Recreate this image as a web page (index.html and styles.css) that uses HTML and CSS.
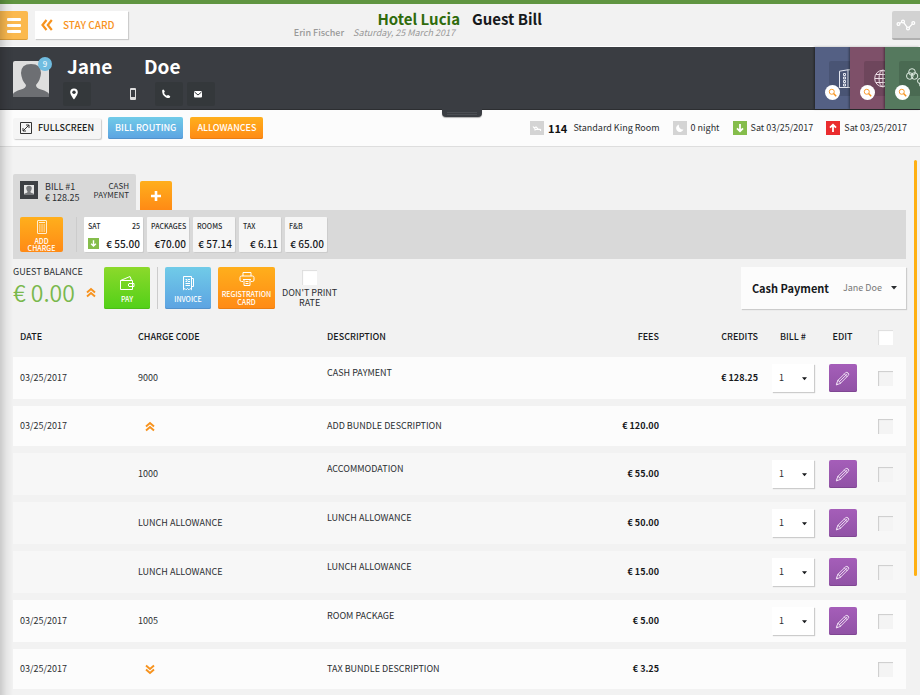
FILE: index.html
```html
<!DOCTYPE html>
<html lang="en">
<head>
<meta charset="utf-8">
<meta name="viewport" content="width=device-width, initial-scale=1">
<title>Guest Bill</title>
<link rel="stylesheet" href="styles.css">
</head>
<body>
<svg class="sprite" aria-hidden="true">
  <symbol id="chevrons" viewBox="0 0 10 10"><path d="M1 5 5 1.5 9 5M1 9 5 5.5 9 9" fill="none" stroke="currentColor" stroke-width="1.9"/></symbol>
  <symbol id="caret" viewBox="0 0 6 4"><path d="M0 0h6L3 3.6z" fill="currentColor"/></symbol>
  <symbol id="pencil" viewBox="0 0 16 16"><g fill="none" stroke="currentColor" stroke-width="1" stroke-linejoin="round" stroke-linecap="round"><path d="M1.500 14.500 3 10 11.300 1.900Q12.700.8 14 2.100T14.100 4.800L5.900 13z"/><path d="M3 10q1.300-.1 1.500 1.400Q5.900 11.600 5.900 13M4.500 11.400l8.300-8M10 3.200 12.800 6M1.800 13.300l1 .9"/></g></symbol>
  <symbol id="person" viewBox="0 0 36 36"><path d="M0 36v-3q1-2.500 8-4.500 5-1.500 5-4.500-4.500-5-5-12Q8 3 18 3t10 9q-.5 7-5 12 0 3 5 4.500 7 2 8 4.500v3z" fill="currentColor"/></symbol>
  <symbol id="lens" viewBox="0 0 10 10"><circle cx="4.200" cy="4.200" r="2.800" fill="none" stroke="currentColor"/><path d="m6.200 6.200 2.900 2.900" stroke="currentColor" stroke-width="1.600"/></symbol>
  <symbol id="arrow-down" viewBox="0 0 14 14"><path d="M7 3v7M4 7.300l3 3 3-3" fill="none" stroke="#fff" stroke-width="1.800"/></symbol>
  <symbol id="arrow-up" viewBox="0 0 14 14"><path d="M7 11V4M4 6.700l3-3 3 3" fill="none" stroke="#fff" stroke-width="1.800"/></symbol>
</svg>

<header class="topbar">
  <div class="topbar-left">
    <button class="menu-btn" aria-label="Menu"><span></span><span></span><span></span></button>
    <a class="stay-card" href="#"><svg class="back-icon" aria-hidden="true" viewBox="0 0 12 12"><path d="M5.500 1 1.500 6l4 5M10.800 1l-4 5 4 5" fill="none" stroke="currentColor" stroke-width="2.200"/></svg>STAY CARD</a>
    <div class="hotel">
      <strong class="title hotel-name">Hotel Lucia</strong>
      <span class="subtitle"><b>Erin Fischer</b><i>Saturday, 25 March 2017</i></span>
    </div>
  </div>
  <div class="topbar-right">
    <h1 class="title">Guest Bill</h1>
    <button class="stats-btn" aria-label="Statistics"><svg viewBox="0 0 20 12"><g fill="none" stroke="#fff" stroke-width="1.300"><circle cx="2.500" cy="5" r="1.400"/><circle cx="7" cy="2.500" r="1.400"/><circle cx="12" cy="9.500" r="1.400"/><circle cx="17.300" cy="4" r="1.400"/><path d="m3.800 4.300 2-1.100M7.800 3.700l3.400 4.600M13 8.500l3.300-3.400"/></g></svg></button>
  </div>
</header>

<section class="guest">
  <div class="avatar"><svg aria-hidden="true"><use href="#person"/></svg><span class="badge">9</span></div>
  <div class="guest-info">
    <h2 class="guest-name"><span class="first">Jane</span><span>Doe</span></h2>
    <div class="contacts">
      <button class="contact" aria-label="Address"><svg viewBox="0 0 12 12"><path d="M6 .5a3.800 3.800 0 0 0-3.800 3.800C2.200 7 6 11.500 6 11.500S9.800 7 9.800 4.300A3.800 3.800 0 0 0 6 .5z" fill="#fff"/><circle cx="6" cy="4.300" r="1.700" fill="#34383b"/></svg></button>
      <button class="contact mobile" aria-label="Mobile"><svg viewBox="0 0 12 12"><path d="M3.500.5h5v11h-5zM3.500 1.500h5M3.500 9.500h5M3.500 10.500h5" fill="none" stroke="#ddd"/></svg></button>
      <button class="contact" aria-label="Phone"><svg viewBox="0 0 12 12"><path d="M2.200 2.200Q3.200 1 4 2l.8 1.500q.2.600-.8 1.300.5 2 2.800 3 .8-1 1.400-.7l1.700.9q.9.600-.3 1.700-1.200.9-3.600-.3Q1.600 6.900 2.200 2.200z" fill="#fff"/></svg></button>
      <button class="contact" aria-label="Email"><svg viewBox="0 0 12 12"><rect x="2" y="3" width="8" height="6.500" rx="1" fill="#fff"/><path d="m2.500 4 3.500 3 3.500-3" fill="none" stroke="#34383b"/></svg></button>
    </div>
  </div>
  <nav class="tiles" aria-label="Guest cards">
    <a class="tile blue" href="#" aria-label="Reservation"><span class="tile-box"><svg viewBox="0 0 20 20"><g fill="none" stroke="#e4e7f0" stroke-width="1"><path d="M.5 18.500V2.200L9 .8v17.700zM9 .8h11M0 18.500h20"/><path d="M4.500 4.500h2v2h-2zM4.500 8h2v2h-2zM4.500 11.500h2v2h-2zM4.500 15h2v2h-2z"/></g></svg></span><span class="find"><svg><use href="#lens"/></svg></span></a>
    <a class="tile plum" href="#" aria-label="Web"><span class="tile-box"><svg viewBox="0 0 20 20"><g fill="none" stroke="#eedfe7" stroke-width="1"><circle cx="9" cy="9.500" r="8.300"/><ellipse cx="9" cy="9.500" rx="4" ry="8.300"/><path d="M9 1v17M.8 9.500h16.500M2 5.500h14M2 13.500h14"/></g></svg></span><span class="find"><svg><use href="#lens"/></svg></span></a>
    <a class="tile green" href="#" aria-label="Groups"><span class="tile-box"><svg viewBox="0 0 20 20"><g fill="none" stroke="#deebe1" stroke-width="1"><circle cx="6" cy="4" r="3.300"/><circle cx="3.800" cy="8" r="3.300"/><circle cx="8.500" cy="8" r="3.300"/><circle cx="14" cy="13" r="2.500"/><circle cx="16" cy="16.500" r="2.500"/></g></svg></span><span class="find"><svg><use href="#lens"/></svg></span></a>
  </nav>
  <button class="handle" aria-label="Expand guest details"><span></span></button>
</section>

<section class="toolbar">
  <button class="btn plain"><svg viewBox="0 0 12 12"><path d="M.5.5h11v11H.500zM3 9l6-6M6 3h3v3M3 6v3h3" fill="none" stroke="#333"/></svg>FULLSCREEN</button>
  <button class="btn sky">BILL ROUTING</button>
  <button class="btn amber">ALLOWANCES</button>
  <div class="stay">
    <span class="fact"><svg class="grey" viewBox="0 0 14 14"><path d="M3 5.500 5 8v1.500M4 7l2-1 2 2 2.500.5v1.500M5 8.500h5" fill="none" stroke="#fff" stroke-width="1.200"/></svg><b>114</b><span>Standard King Room</span></span>
    <span class="fact"><svg class="grey" viewBox="0 0 14 14"><path d="M6 3.500a3.800 3.800 0 1 0 4.500 5A4 4 0 0 1 6 3.500z" fill="#fff"/></svg>0 night</span>
    <span class="fact"><svg class="lime"><use href="#arrow-down"/></svg>Sat 03/25/2017</span>
    <span class="fact"><svg class="red"><use href="#arrow-up"/></svg>Sat 03/25/2017</span>
  </div>
</section>

<main>
  <div class="scrollbar" aria-hidden="true"></div>
  <div class="tabs">
    <button class="bill-tab">
      <span class="thumb"><svg aria-hidden="true"><use href="#person"/></svg></span>
      <span class="bill-sum">BILL #1<br>€ 128.25</span>
      <span class="bill-pay">CASH<br>PAYMENT</span>
    </button>
    <button class="add-bill" aria-label="Add bill"><svg viewBox="0 0 10 10"><path d="M5 0v10M0 5h10" stroke="#fff" stroke-width="2.600"/></svg></button>
  </div>

  <div class="charges">
    <button class="add-charge"><svg viewBox="0 0 12 14"><g fill="none" stroke="#fff" stroke-width=".8"><rect x="1.500" y=".5" width="9" height="13" rx=".5"/><path d="M3 2.500h6M3 5h1.500M5.300 5h1.500M7.500 5H9M3 7h1.500M5.300 7h1.500M7.500 7H9M3 9h1.500M5.300 9h1.500M7.500 9H9M3 11h1.500M5.300 11h1.500M7.500 11H9"/></g></svg>ADD<br>CHARGE</button>
    <span class="rule"></span>
    <div class="cards">
      <div class="card day"><span class="cap">SAT<span>25</span></span><span class="sum"><svg class="lime"><use href="#arrow-down"/></svg>€ 55.00</span></div>
      <div class="card"><span class="cap">PACKAGES</span><span class="sum">€70.00</span></div>
      <div class="card"><span class="cap">ROOMS</span><span class="sum">€ 57.14</span></div>
      <div class="card"><span class="cap">TAX</span><span class="sum">€ 6.11</span></div>
      <div class="card"><span class="cap">F&amp;B</span><span class="sum">€ 65.00</span></div>
    </div>
  </div>

  <div class="actions">
    <div class="balance"><span>GUEST BALANCE</span><span class="amount">€ 0.00<svg class="chev"><use href="#chevrons"/></svg></span></div>
    <button class="action lawn"><svg viewBox="0 0 16 16"><g fill="none" stroke="#fff" stroke-linejoin="round"><path d="M1.500 5.500h12V14.500h-12zM1.500 5.500 11 1.500l1.500 3.800M13.500 8.500H10q-1.500 1.500 0 3h3.500M13.500 8.500h1.500v3h-1.500"/></g></svg>PAY</button>
    <span class="rule"></span>
    <button class="action sky"><svg viewBox="0 0 16 16"><g fill="none" stroke="#fff"><path d="M3.500 14.800V1.500h8v13.300l-1.300-1.300-1.300 1.300-1.400-1.300-1.300 1.300-1.300-1.300zM11.500 3.500h2v8h-2"/><path d="M5.500 4.500h1.500v2H5.500M8 4.500h2M8 6.500h2M5.500 8.500H10M5.500 10.500H10"/></g></svg>INVOICE</button>
    <button class="action amber wide"><svg viewBox="0 0 16 16"><g fill="none" stroke="#fff" stroke-linejoin="round"><path d="M4 5V1.500h8V5M4 10.500H2.500Q1 10.500 1 9V6.500Q1 5 2.500 5h11Q15 5 15 6.500V9q0 1.500-1.500 1.500H12M4 8.500h8M5 8.500v6h6v-6M6.500 10.500h3M6.500 12.500h3"/></g></svg>REGISTRATION CARD</button>
    <label class="no-rate"><input type="checkbox" class="check white">DON'T PRINT<br>RATE</label>
    <button class="payer" aria-haspopup="listbox"><b>Cash Payment</b><span>Jane Doe</span><svg><use href="#caret"/></svg></button>
  </div>

  <table>
    <colgroup><col class="c-date"><col class="c-code"><col><col class="c-fees"><col class="c-credits"><col class="c-bill"><col class="c-edit"><col class="c-check"></colgroup>
    <thead>
      <tr><th>DATE</th><th>CHARGE CODE</th><th>DESCRIPTION</th><th class="num">FEES</th><th class="num">CREDITS</th><th class="mid">BILL #</th><th class="mid">EDIT</th><th class="mid"><input type="checkbox" class="check white" aria-label="Select all"></th></tr>
    </thead>
    <tbody>
      <tr class="tall"><td>03/25/2017</td><td>9000</td><td class="desc">CASH PAYMENT</td><td class="num"></td><td class="num">€ 128.25</td><td class="mid"><span class="pick"><select aria-label="Bill number, cash payment"><option>1</option></select><svg><use href="#caret"/></svg></span></td><td class="mid"><button class="edit" aria-label="Edit cash payment"><svg><use href="#pencil"/></svg></button></td><td class="mid"><input type="checkbox" class="check" aria-label="Select cash payment"></td></tr>
      <tr><td>03/25/2017</td><td><button class="toggle" aria-label="Collapse bundle"><svg class="chev"><use href="#chevrons"/></svg></button></td><td>ADD BUNDLE DESCRIPTION</td><td class="num">€ 120.00</td><td class="num"></td><td></td><td></td><td class="mid"><input type="checkbox" class="check" aria-label="Select bundle"></td></tr>
      <tr class="tall sub"><td></td><td>1000</td><td class="desc">ACCOMMODATION</td><td class="num">€ 55.00</td><td class="num"></td><td class="mid"><span class="pick"><select aria-label="Bill number, accommodation"><option>1</option></select><svg><use href="#caret"/></svg></span></td><td class="mid"><button class="edit" aria-label="Edit accommodation"><svg><use href="#pencil"/></svg></button></td><td class="mid"><input type="checkbox" class="check" aria-label="Select accommodation"></td></tr>
      <tr class="tall sub"><td></td><td>LUNCH ALLOWANCE</td><td class="desc">LUNCH ALLOWANCE</td><td class="num">€ 50.00</td><td class="num"></td><td class="mid"><span class="pick"><select aria-label="Bill number, first lunch allowance"><option>1</option></select><svg><use href="#caret"/></svg></span></td><td class="mid"><button class="edit" aria-label="Edit first lunch allowance"><svg><use href="#pencil"/></svg></button></td><td class="mid"><input type="checkbox" class="check" aria-label="Select first lunch allowance"></td></tr>
      <tr class="tall sub"><td></td><td>LUNCH ALLOWANCE</td><td class="desc">LUNCH ALLOWANCE</td><td class="num">€ 15.00</td><td class="num"></td><td class="mid"><span class="pick"><select aria-label="Bill number, second lunch allowance"><option>1</option></select><svg><use href="#caret"/></svg></span></td><td class="mid"><button class="edit" aria-label="Edit second lunch allowance"><svg><use href="#pencil"/></svg></button></td><td class="mid"><input type="checkbox" class="check" aria-label="Select second lunch allowance"></td></tr>
      <tr class="tall"><td>03/25/2017</td><td>1005</td><td class="desc">ROOM PACKAGE</td><td class="num">€ 5.00</td><td class="num"></td><td class="mid"><span class="pick"><select aria-label="Bill number, room package"><option>1</option></select><svg><use href="#caret"/></svg></span></td><td class="mid"><button class="edit" aria-label="Edit room package"><svg><use href="#pencil"/></svg></button></td><td class="mid"><input type="checkbox" class="check" aria-label="Select room package"></td></tr>
      <tr><td>03/25/2017</td><td><button class="toggle" aria-label="Expand bundle"><svg class="chev down"><use href="#chevrons"/></svg></button></td><td>TAX BUNDLE DESCRIPTION</td><td class="num">€ 3.25</td><td class="num"></td><td></td><td></td><td class="mid"><input type="checkbox" class="check" aria-label="Select tax bundle"></td></tr>
    </tbody>
  </table>
</main>
</body>
</html>
```
FILE: styles.css
```css
* { box-sizing: border-box; }

body {
  margin: 0;
  background: #f2f2f2;
  color: #2b2e31;
  font: 9px/10px "Noto Sans CJK SC", "Noto Sans", sans-serif;
}

/* soft shade down the left edge of the window */
body::before {
  content: "";
  position: fixed;
  inset: 0 auto 0 0;
  width: 13px;
  background: linear-gradient(90deg, rgba(0, 0, 0, .16), rgba(0, 0, 0, .05) 50%, rgba(0, 0, 0, 0));
  pointer-events: none;
  z-index: 5;
}

button, select, input { font: inherit; color: inherit; margin: 0; }
button { border: 0; padding: 0; background: none; cursor: pointer; }
a { color: inherit; text-decoration: none; }
h1, h2 { margin: 0; }
svg { display: block; flex: none; }
.sprite { position: absolute; width: 0; height: 0; }

/* top bar */
.topbar {
  display: grid;
  grid-template-columns: 1fr 1fr;
  height: 47px;
  border-top: 4px solid #609541;
  border-bottom: 1px solid #fff;
}
.topbar-left, .topbar-right { display: flex; align-items: flex-start; padding-top: 7px; }
.topbar-right { justify-content: space-between; padding-left: 12px; }
.menu-btn {
  display: flex;
  flex-direction: column;
  justify-content: center;
  align-items: center;
  gap: 3px;
  width: 28px;
  height: 29px;
  background: #fbb94e;
  border-bottom: 1px solid #d99c3a;
  border-radius: 0 2px 2px 0;
}
.menu-btn span { width: 14px; height: 3px; border-radius: 1px; background: #fff; }
.stay-card {
  display: flex;
  align-items: center;
  gap: 10px;
  height: 28px;
  margin-left: 7px;
  padding: 0 13px 0 6px;
  background: #fff;
  box-shadow: 1px 1px 1px #ccc;
  color: #f7931e;
  font-size: 10px;
  font-weight: 500;
}
.back-icon { width: 12px; height: 12px; }
.hotel { display: flex; flex-direction: column; align-items: flex-end; margin-left: auto; }
.title { font-size: 15px; line-height: 15px; font-weight: 700; color: #17191c; white-space: nowrap; }
.hotel-name { color: #2f6b0c; }
.subtitle { display: flex; gap: 9px; padding-right: 5px; line-height: 14px; color: #999; white-space: nowrap; }
.subtitle b { font-weight: 500; }
.stats-btn {
  display: grid;
  place-items: center;
  width: 28px;
  height: 29px;
  background: #d2d2d2;
  border-bottom: 2px solid #b0b0b0;
  border-radius: 2px 0 0 2px;
}
.stats-btn svg { width: 20px; height: 12px; }

/* guest strip */
.guest { position: relative; display: flex; height: 63px; padding-left: 13px; background: #3a3d42; border-bottom: 1px solid #2c2e31; }
.avatar { position: relative; width: 36px; height: 36px; margin-top: 14px; border-radius: 2px; background: #dedede; color: #6d6f73; }
.avatar svg { width: 36px; height: 36px; }
.badge {
  position: absolute;
  top: -4px;
  right: -3px;
  width: 14px;
  height: 14px;
  border-radius: 50%;
  background: #70bce0;
  color: #fff;
  font-size: 8px;
  line-height: 14px;
  text-align: center;
}
.guest-info { padding: 9px 0 0 14px; }
.guest-name { display: flex; padding-left: 4px; color: #fff; font-size: 19px; line-height: 20px; }
.first { width: 77px; }
.contacts { display: flex; gap: 4px; margin-top: 6px; }
.contact { display: flex; align-items: center; width: 28px; height: 24px; padding-left: 5px; background: #34383b; border-radius: 2px; }
.contact svg { width: 12px; height: 12px; }
.mobile { margin: 0 4px 0 24px; padding-left: 8px; background: none; }
.tiles { display: flex; margin-left: auto; }
.tile { position: relative; width: 35px; padding: 14px 0 0 14px; overflow: hidden; box-shadow: -1px 0 2px rgba(0, 0, 0, .4); }
.tile-box { display: block; height: 35px; padding: 8px 0 0 10px; border-radius: 2px 0 0 2px; background: rgba(0, 0, 0, .12); }
.tile-box svg { width: 20px; height: 20px; }
.blue { background: #546084; }
.plum { background: #7e5069; }
.green { background: #55795e; }
.green .tile-box { padding-left: 7px; padding-top: 7px; }
.find { position: absolute; left: 10px; top: 38px; display: grid; place-items: center; width: 15px; height: 15px; border-radius: 50%; background: #fff; color: #f7931e; }
.find svg { width: 9px; height: 9px; }
.handle { position: absolute; left: 48%; top: 100%; width: 40px; height: 8px; padding: 1px 5px; border-radius: 0 0 4px 4px; background: #3a3d42; box-shadow: 0 1px 1px rgba(0, 0, 0, .3); }
.handle span { display: block; height: 3px; border: solid #4b4e53; border-width: 1px 0; }

/* toolbar */
.toolbar { display: flex; align-items: center; gap: 7px; height: 37px; padding: 0 13px; background: #fcfcfc; border-bottom: 1px solid #dedede; }
.btn { display: flex; align-items: center; gap: 6px; height: 22px; padding: 0 7px; border-radius: 2px; color: #fff; font-weight: 500; white-space: nowrap; }
.plain { height: 21px; background: #f5f5f5; box-shadow: 1px 1px 1px #ccc; color: #1c1e20; }
.plain svg { width: 12px; height: 12px; }
.sky { background: linear-gradient(#70cbe8, #5ca3e2); box-shadow: inset 0 -1px #5292cc; }
.amber { background: linear-gradient(#ffaf1c, #ff8a15); box-shadow: inset 0 -1px #ea7d12; }
.lawn { background: linear-gradient(#8cd92b, #52d018); box-shadow: inset 0 -1px #4bbd16; }
.stay { display: flex; gap: 13px; margin-left: auto; }
.fact { display: flex; align-items: center; gap: 4px; white-space: nowrap; }
.fact svg { width: 14px; height: 14px; }
.fact b { margin-right: 2px; font-size: 11px; color: #111; }
.grey { background: #d4d4d4; }
.lime { background: #85bd4b; }
.red { background: #ea2c2e; }

/* content */
main { position: relative; padding: 27px 14px 0 13px; }
.scrollbar { position: absolute; top: 13px; right: 3px; width: 3px; height: 416px; border-radius: 2px; background: #ffb014; }
.tabs { display: flex; align-items: flex-end; gap: 4px; }
.bill-tab { display: flex; align-items: flex-start; width: 123px; height: 36px; padding: 7px 7px 0; border-radius: 2px 2px 0 0; background: #d9d9d9; text-align: left; }
.thumb { width: 18px; height: 18px; padding: 4px; background: #3d4044; }
.thumb svg { width: 10px; height: 10px; background: #e6e6e6; color: #77797c; }
.bill-sum { margin-left: 7px; line-height: 11px; }
.bill-pay { margin-left: auto; font-size: 8px; line-height: 9px; text-align: right; }
.add-bill { display: grid; place-items: center; width: 32px; height: 29px; border-radius: 2px 2px 0 0; background: linear-gradient(#ffaf1c, #ff8a15); }
.add-bill svg { width: 10px; height: 10px; }
.charges { display: flex; gap: 7px; padding: 7px; background: #d9d9d9; }
.add-charge { display: flex; flex-direction: column; align-items: center; justify-content: flex-end; width: 43px; height: 35px; border-radius: 2px; background: linear-gradient(#ffaf1c, #ff8a15); color: #fff; font-size: 7px; line-height: 7px; font-weight: 500; }
.add-charge svg { width: 12px; height: 14px; margin-bottom: 4px; }
.rule { width: 1px; background: #ccc; }
.charges .rule { margin-left: 6px; }
.cards { display: flex; gap: 4px; }
.card { display: flex; flex-direction: column; justify-content: space-between; width: 42px; height: 35px; padding: 4px 3px 3px 4px; border-radius: 1px; background: #f6f6f6; box-shadow: 1px 1px #ccc; white-space: nowrap; }
.day { width: 59px; background: #fff; }
.cap { display: flex; justify-content: space-between; font-size: 7px; font-weight: 500; }
.sum { display: flex; justify-content: flex-end; align-items: center; font-size: 10px; font-weight: 500; color: #17191c; }
.sum svg { width: 11px; height: 11px; margin-right: auto; }

.actions { display: flex; gap: 7px; height: 42px; margin-top: 8px; }
.balance { display: flex; flex-direction: column; width: 84px; white-space: nowrap; }
.amount { display: flex; align-items: center; justify-content: space-between; padding-right: 1px; color: #79b84c; font-size: 23px; line-height: 30px; font-weight: 350; }
.chev { width: 10px; height: 11px; color: #f7931e; }
.down { transform: rotate(180deg); }
.action { display: flex; flex-direction: column; align-items: center; justify-content: flex-end; width: 46px; padding-bottom: 6px; border-radius: 2px; color: #fff; font-size: 7px; line-height: 8px; font-weight: 500; }
.action svg { width: 16px; height: 16px; margin-bottom: 4px; }
.wide { width: 57px; padding-bottom: 3px; }
.wide svg { margin-bottom: 3px; }
.no-rate { padding-top: 3px; text-align: center; white-space: nowrap; }
.no-rate .check { margin: 0 auto 3px; }
.payer { display: flex; align-items: center; margin-left: auto; padding: 0 9px 0 11px; background: #fcfcfc; box-shadow: 1px 1px 1px #ccc; }
.payer b { margin-right: 14px; font-size: 11px; font-weight: 700; color: #17191c; }
.payer span { margin-right: 9px; color: #777; }
.payer svg { width: 6px; height: 4px; }

.check { appearance: none; display: block; width: 15px; height: 15px; margin: auto; background: #f4f4f4; box-shadow: inset 1px 1px 1px #ccc; }
.white { background: #fff; box-shadow: inset 1px 1px 1px #ddd; }

/* ledger */
table { width: 100%; margin-top: 8px; table-layout: fixed; border-collapse: separate; border-spacing: 0 7px; }
.c-date { width: 118px; }
.c-code { width: 189px; }
.c-fees { width: 146px; }
.c-credits { width: 99px; }
.c-bill { width: 56px; }
.c-edit { width: 43px; }
.c-check { width: 42px; }
th, td { padding: 0 7px; text-align: left; }
th { height: 26px; font-weight: 500; color: #17191c; }
td { height: 40px; background: #fcfcfc; }
.tall td { height: 42px; }
.sub td { background: #f7f7f7; }
.num { text-align: right; font-weight: 700; color: #17191c; }
th.num { font-weight: 500; }
.mid { padding: 0; text-align: center; }
td.desc { padding-top: 11px; vertical-align: top; }
.toggle { display: block; margin-left: 7px; }
.pick { position: relative; display: block; width: 42px; height: 28px; margin: 0 auto; background: #fff; box-shadow: 1px 1px 1px #ccc; }
.pick select { appearance: none; width: 100%; height: 100%; padding: 0 7px; border: 0; background: none; }
.pick svg { position: absolute; right: 7px; top: 13px; width: 5px; height: 4px; color: #17191c; pointer-events: none; }
.edit { display: grid; place-items: center; width: 28px; height: 28px; margin: 0 auto; border-radius: 2px; background: linear-gradient(#a55eb9, #9052a5); box-shadow: inset 0 -1px #7f4692; color: #f0e2f4; }
.edit svg { width: 15px; height: 15px; }
```
